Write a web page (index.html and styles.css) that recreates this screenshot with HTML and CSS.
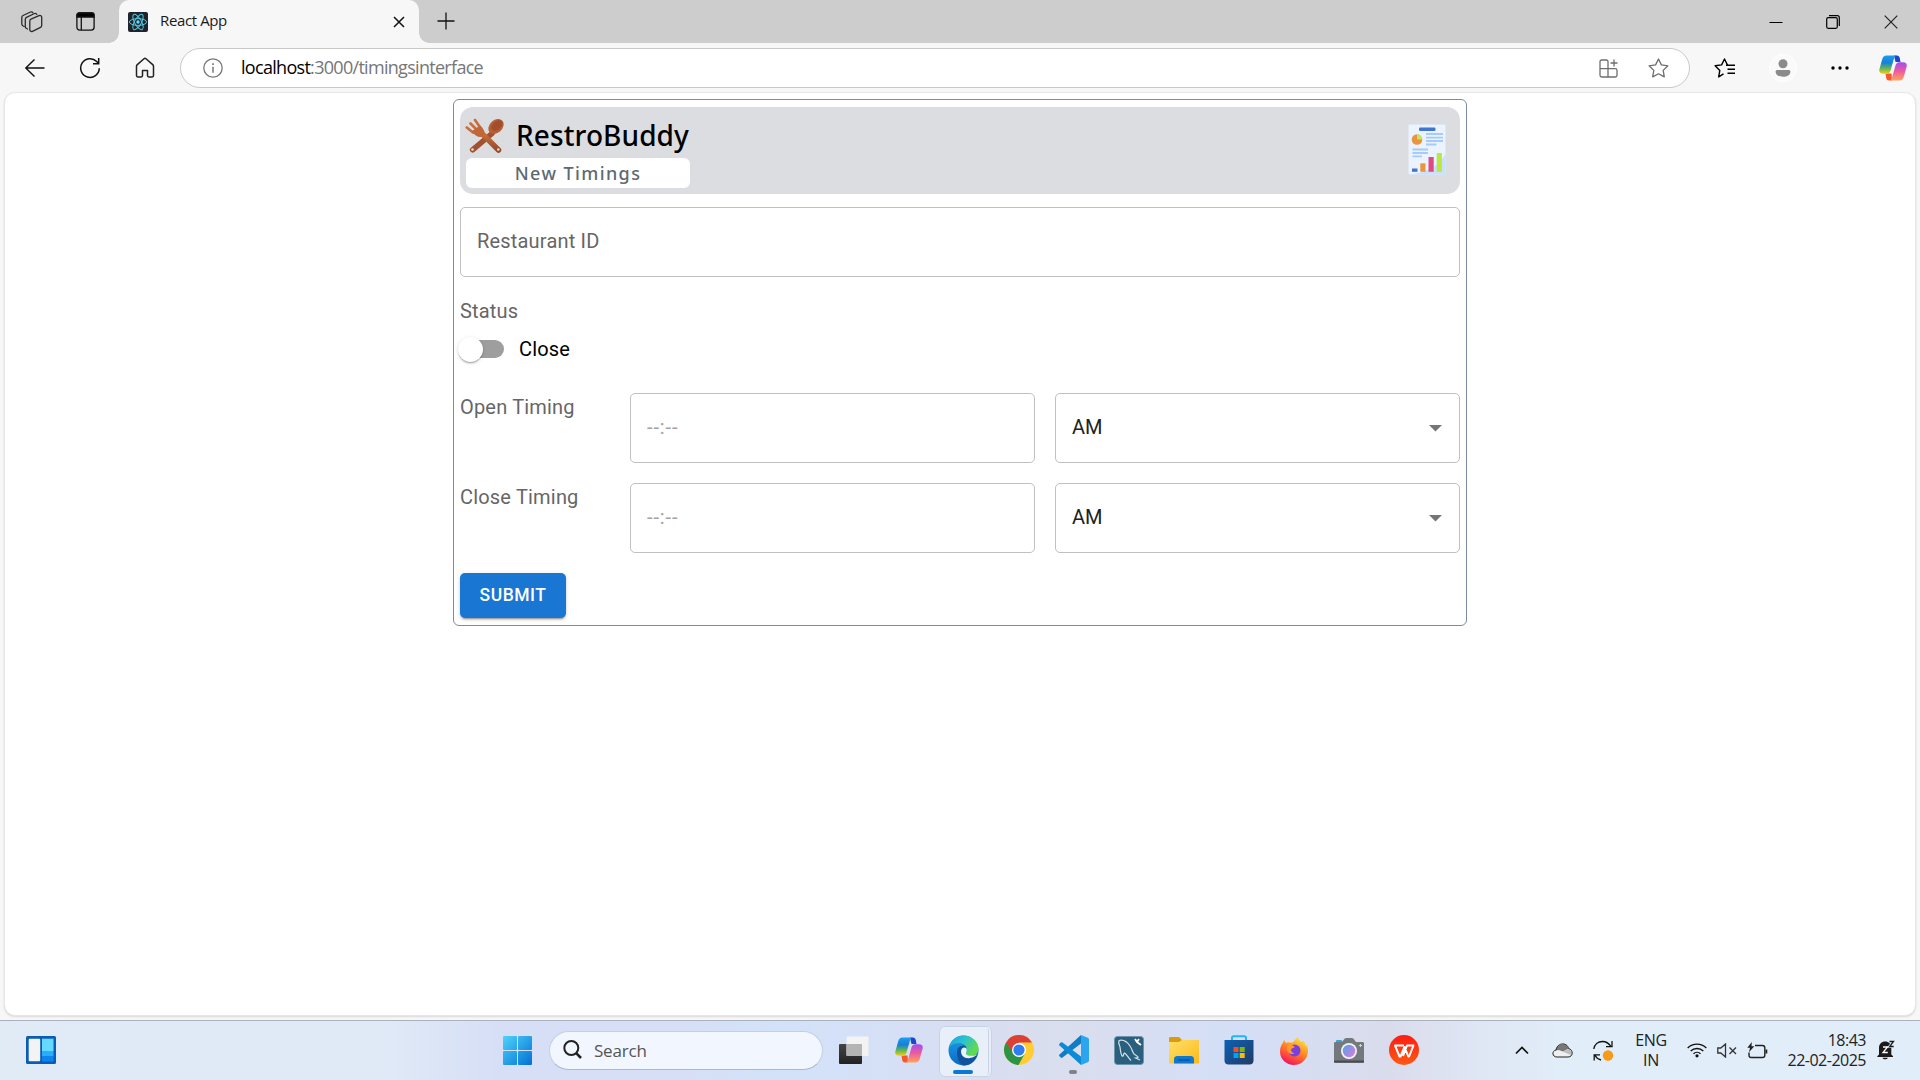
FILE: index.html
```html
<!DOCTYPE html>
<html lang="en">
<head>
<meta charset="utf-8">
<title>React App</title>
<link rel="stylesheet" href="styles.css">
</head>
<body>
<svg class="defs" width="0" height="0" aria-hidden="true">
  <defs>
    <linearGradient id="cpA" x1="0" y1="0" x2="0" y2="1"><stop offset="0" stop-color="#1b9df0"/><stop offset=".4" stop-color="#1580d6"/><stop offset=".7" stop-color="#5fb55a"/><stop offset="1" stop-color="#f0cf12"/></linearGradient>
    <linearGradient id="cpB" x1="0" y1="0" x2="0" y2="1"><stop offset="0" stop-color="#a24df0"/><stop offset=".5" stop-color="#ee5c9c"/><stop offset="1" stop-color="#ffa45e"/></linearGradient>
    <symbol id="copilot" viewBox="0 0 28 26">
      <path d="M15 .5h3c1.500 0 2.300 1 2.700 2.300L21.500 7h-5z" fill="#1b47cf"/>
      <path d="M13 25.500h-3c-1.500 0-2.300-1-2.700-2.300L6.500 18.500h6z" fill="#f2592c"/>
      <path d="M7.600.5H18c-1.800.2-2.600 1.600-3.100 3.300l-3.300 11.400c-.6 2.200-1.700 3.500-4 3.500H4c-2.800 0-4.300-1.600-3.600-4.500L3.300 4C3.900 1.800 5.200.5 7.600.5z" fill="url(#cpA)"/>
      <path d="M20.400 25.500H10c1.800-.2 2.600-1.600 3.100-3.300l3.300-11.400c.6-2.200 1.700-3.500 4-3.500H24c2.800 0 4.300 1.600 3.600 4.500L24.700 22c-.6 2.200-1.900 3.500-4.300 3.500z" fill="url(#cpB)"/>
    </symbol>
  </defs>
</svg>

<div class="tabstrip">
  <div class="strip-icon first">
    <svg width="22" height="22" viewBox="0 0 22 22" fill="none" stroke="#2b2b2b" stroke-width="1.300" stroke-linejoin="round" stroke-linecap="round"><path d="M3.200 15.500 1.800 14.700C1 14.200.8 13.700.8 12.800V6.500c0-1 .4-1.600 1.200-2L9.500 1c1-.4 1.800-.1 2.300.7"/><path d="M6.500 18 5.300 17.300c-.8-.5-1-1-1-1.900V8.300c0-1 .4-1.600 1.200-2L13.500 2.500c1-.4 1.900-.1 2.300.9"/><path d="M8.800 10.200c0-1 .4-1.600 1.200-2L18 4.700c1.400-.6 2.700.1 2.700 1.500v8.200c0 1-.4 1.600-1.200 2l-8 3.900c-1.400.6-2.700-.1-2.700-1.500z"/></svg>
  </div>
  <div class="strip-icon">
    <svg width="19" height="19" viewBox="0 0 19 19" fill="none" stroke="#111" stroke-width="1.300"><rect x=".9" y=".9" width="17.200" height="17.200" rx="2.800"/><path d="M1 2.800C1 1.500 1.800 1 3 1h13c1.200 0 2 .6 2 1.800V5H1z" fill="#000"/><path d="M5.300 5v13"/></svg>
  </div>
  <div class="tab">
    <svg width="20" height="20" viewBox="0 0 20 20"><rect width="20" height="20" rx="2" fill="#20232a"/><g fill="none" stroke="#53c5e0" stroke-width="1"><ellipse cx="10" cy="10" rx="8.600" ry="3.400"/><ellipse cx="10" cy="10" rx="8.600" ry="3.400" transform="rotate(60 10 10)"/><ellipse cx="10" cy="10" rx="8.600" ry="3.400" transform="rotate(120 10 10)"/></g><circle cx="10" cy="10" r="1.700" fill="#61dafb"/></svg>
    <span class="tab-title">React App</span>
    <svg class="tab-close" width="12" height="12" viewBox="0 0 12 12" stroke="#111" stroke-width="1.500"><path d="M1 1l10 10M11 1 1 11"/></svg>
  </div>
  <svg class="new-tab" width="18" height="18" viewBox="0 0 18 18" stroke="#111" stroke-width="1.300"><path d="M9 .5v17M.5 9h17"/></svg>
  <div class="window-controls">
    <svg width="14" height="14" viewBox="0 0 14 14" stroke="#000"><path d="M.5 7.500h13"/></svg>
    <svg width="14" height="14" viewBox="0 0 14 14" fill="none" stroke="#000" stroke-width="1.200"><rect x=".7" y="2.700" width="10.600" height="10.600" rx="1.500"/><path d="M3 .7h8.300c1.200 0 2 .8 2 2V11"/></svg>
    <svg width="14" height="14" viewBox="0 0 14 14" stroke="#222" stroke-width="1.200"><path d="M.7.7l12.600 12.600M13.300.7.7 13.300"/></svg>
  </div>
</div>

<div class="toolbar">
  <div class="nav">
    <svg width="22" height="20" viewBox="0 0 22 20" fill="none" stroke="#111" stroke-width="1.400"><path d="M20.500 10H2M10.500 1.500 1.800 10l8.700 8.500"/></svg>
    <svg width="22" height="22" viewBox="0 0 22 22" fill="none" stroke="#111" stroke-width="1.500"><path d="M20.300 11.300A9.300 9.300 0 1 1 17.700 4.600L19.500 6.500"/><path d="M19.700 1v5.700H14"/></svg>
    <svg width="20" height="22" viewBox="0 0 20 22" fill="none" stroke="#222" stroke-width="1.500" stroke-linejoin="round"><path d="M1.500 9.300c0-.7.300-1.200.8-1.700L9 1.800c.7-.6 1.300-.6 2 0l6.700 5.800c.5.500.8 1 .8 1.700V18.500c0 .9-.5 1.400-1.300 1.400h-3.400c-.8 0-1.300-.5-1.300-1.300v-5H7.500v5c0 .8-.5 1.300-1.300 1.300H2.800c-.8 0-1.300-.5-1.300-1.400z"/></svg>
  </div>
  <div class="urlbar">
    <svg width="20" height="20" viewBox="0 0 20 20" fill="none" stroke="#777" stroke-width="1.300"><circle cx="10" cy="10" r="9.200"/><path d="M10 8.700v6" stroke-width="1.500"/><path d="M10 5.200v1.700" stroke-width="1.700"/></svg>
    <div class="url"><span class="host">localhost</span>:3000/timingsinterface</div>
    <svg class="url-apps" width="19" height="19" viewBox="0 0 19 19" fill="none" stroke="#6e6e6e" stroke-width="1.300"><path d="M9 9.700V2.800C9 1.600 8.400 1 7.200 1H2.800C1.600 1 1 1.600 1 2.800v13.400C1 17.400 1.600 18 2.800 18h13.400c1.200 0 1.800-.6 1.800-1.800v-4.700c0-1.200-.6-1.800-1.800-1.800H1M9 9.700V18M15 .5v7M11.500 4h7"/></svg>
    <svg class="url-star" width="21" height="20" viewBox="0 0 21 20" fill="none" stroke="#6e6e6e" stroke-width="1.300" stroke-linejoin="round"><path d="M10.500 1l2.900 5.900 6.500.9-4.700 4.600 1.100 6.500-5.800-3.100L4.700 18.900l1.100-6.500L1.100 7.800l6.500-.9z"/></svg>
  </div>
  <div class="tools">
    <svg width="22" height="20" viewBox="0 0 22 20" fill="none" stroke="#000" stroke-width="1.400" stroke-linejoin="round"><path d="M9.500 15.800 4.700 18.900l1.100-6.500L1.100 7.800l6.500-.9L10.500 1l2.900 5.900M12 7.200h9M13.500 11.200H21M13.500 15.200H21"/></svg>
    <svg width="28" height="28" viewBox="0 0 28 28"><circle cx="14" cy="14" r="13.500" fill="#fafafa" stroke="#fff"/><circle cx="14" cy="9.800" r="4.500" fill="#8b8b8b"/><path d="M8.600 16h10.800c1.300 0 2 .6 2 1.800 0 3-3.200 5-7.400 5s-7.400-2-7.400-5c0-1.200.7-1.800 2-1.800z" fill="#8b8b8b"/></svg>
    <svg width="18" height="4" viewBox="0 0 18 4"><circle cx="2" cy="2" r="1.700"/><circle cx="9" cy="2" r="1.700"/><circle cx="16" cy="2" r="1.700"/></svg>
    <svg width="28" height="26"><use href="#copilot"/></svg>
  </div>
</div>

<main class="viewport">
  <section class="card">
    <header class="banner">
      <div class="brand">
        <div class="brand-row">
          <svg width="39" height="36" viewBox="0 0 39 36">
            <defs><linearGradient id="wood" x1="0" y1="0" x2="0" y2="1"><stop offset="0" stop-color="#c8713c"/><stop offset="1" stop-color="#97492a"/></linearGradient></defs>
            <path d="M4.600 32.300 24 16" stroke="#a2502e" stroke-width="5.500" stroke-linecap="round" transform="translate(3 -.5)"/>
            <ellipse cx="31" cy="8.500" rx="8.600" ry="6.300" transform="rotate(-42 31 8.500)" fill="#b45f35"/>
            <ellipse cx="31.800" cy="7.500" rx="6.400" ry="4.200" transform="rotate(-42 31.800 7.500)" fill="#a34e2a"/>
            <path d="M33.500 32 17 15.500" stroke="url(#wood)" stroke-width="5.500" stroke-linecap="round"/>
            <path d="M1.800 9.500 8 14.500M5.500 5.500l6 6M10 2l5.500 8" stroke="#c96f3c" stroke-width="2.700" stroke-linecap="round"/>
            <path d="M6.500 13.500 15 7.500c3 2.500 5.500 6 4 9.500-3 4-8 2-12.500-3.500z" fill="#bf6738"/>
            <circle cx="7.500" cy="31.500" r="1.300" fill="#e9dcd7"/><circle cx="33.300" cy="31.500" r="1.300" fill="#e9dcd7"/>
          </svg>
          <div class="brand-name">RestroBuddy</div>
        </div>
        <div class="page-name">New Timings</div>
      </div>
      <svg width="38" height="51" viewBox="0 0 38 51">
        <rect x=".5" y=".5" width="37" height="50" rx="1" fill="#eaf3ff"/>
        <path d="M37.500 30v20.500H2C20 48.500 31 41 37.500 30z" fill="#cbe0fb"/>
        <rect x="11" y="3.500" width="16.500" height="3.500" rx="1.200" fill="#4275cc"/>
        <circle cx="9" cy="15.500" r="5.300" fill="#e8953c"/><path d="M9 15.500v-5.300a5.300 5.300 0 0 1 5.300 5.300z" fill="#c4e860"/>
        <path d="M18 10h17M18 13.700h17M18 17h17M18 20.500h10.500M4.500 25.500h15.500M4.500 29h15.500M4.500 32.300h9.500" stroke="#a6cafa" stroke-width="1.800"/>
        <path d="M4 44.500h5.500v3.300H4z" fill="#4275cc"/><path d="M12.300 39.300h5.200v8.500h-5.200z" fill="#e8953c"/><path d="M20.500 33h5.200v14.800h-5.200z" fill="#de4a85"/><path d="M28.700 29h5.200v18.800h-5.200z" fill="#bce641"/>
      </svg>
    </header>

    <div class="field id-field">Restaurant ID</div>

    <div class="status-label">Status</div>
    <div class="switch-row">
      <div class="switch"><div class="thumb"></div></div>
      <span>Close</span>
    </div>

    <div class="timing-row">
      <div class="label">Open Timing</div>
      <div class="field time">--:--</div>
      <div class="field select">AM<svg width="13" height="7" viewBox="0 0 13 7"><path d="M0 0h13L6.500 6.500z" fill="#757575"/></svg></div>
    </div>
    <div class="timing-row">
      <div class="label">Close Timing</div>
      <div class="field time">--:--</div>
      <div class="field select">AM<svg width="13" height="7" viewBox="0 0 13 7"><path d="M0 0h13L6.500 6.500z" fill="#757575"/></svg></div>
    </div>
    <button class="submit">SUBMIT</button>
  </section>
</main>

<footer class="taskbar">
  <svg class="widgets" width="30" height="28" viewBox="0 0 30 28"><rect width="30" height="28" rx="1.500" fill="#0b5cb5"/><rect x="2.700" y="2.700" width="11.500" height="22.600" rx="1" fill="#f3f3f3"/><rect x="16" y="2.700" width="11.500" height="12.300" fill="#66d9ff"/><rect x="16" y="15" width="11.500" height="5.500" fill="#28aefc"/><rect x="16" y="20.500" width="11.500" height="5" fill="#0b85f2"/></svg>

  <div class="apps">
    <svg class="start" width="29" height="29" viewBox="0 0 29 29"><defs><linearGradient id="win" gradientUnits="userSpaceOnUse" x1="0" y1="0" x2="29" y2="29"><stop offset="0" stop-color="#4fd3fc"/><stop offset="1" stop-color="#0270d2"/></linearGradient></defs><g fill="url(#win)"><rect width="14" height="14" rx="1"/><rect x="15" width="14" height="14" rx="1"/><rect y="15" width="14" height="14" rx="1"/><rect x="15" y="15" width="14" height="14" rx="1"/></g></svg>
    <div class="search">
      <svg width="20" height="20" viewBox="0 0 20 20" fill="none" stroke="#222" stroke-width="2"><circle cx="8.300" cy="8" r="7"/><path d="M13.200 13.200 18 18" stroke-width="2.600"/></svg>
      <span>Search</span>
    </div>
    <div class="app">
      <svg width="30" height="28" viewBox="0 0 30 28"><defs><linearGradient id="tv" x1="0" y1="0" x2="0" y2="1"><stop offset="0" stop-color="#444"/><stop offset="1" stop-color="#222"/></linearGradient></defs><rect y="8" width="23" height="20" rx="1" fill="url(#tv)"/><rect x="7.500" y=".5" width="22" height="19.500" rx="1" fill="#f3f3f3"/><path d="M7.500 8H22c.6 0 1 .4 1 1v11H8.500a1 1 0 0 1-1-1z" fill="#b4b4b4"/></svg>
    </div>
    <div class="app"><svg width="28" height="26"><use href="#copilot"/></svg></div>
    <div class="app active">
      <svg width="31" height="31" viewBox="0 0 31 31"><defs><linearGradient id="edT" x1="0" y1="0" x2="1" y2=".5"><stop offset="0" stop-color="#1d9fe0"/><stop offset=".5" stop-color="#2bc1cf"/><stop offset="1" stop-color="#62db4b"/></linearGradient><linearGradient id="edB" x1="0" y1="0" x2="0" y2="1"><stop offset="0" stop-color="#1ba0e8"/><stop offset="1" stop-color="#0b6ac4"/></linearGradient></defs>
        <circle cx="15.500" cy="15.500" r="15" fill="url(#edB)"/>
        <path d="M9 17c0-4 3-7 7.500-6.500 3 .5 3 4 1.500 5.500-1 1.300-.5 4.500 4.500 5 3 .3 5.500-.8 6.800-1.500C27 26.500 22 31 15.500 30.500 11 29 9 23 9 17z" fill="#11529f"/>
        <path d="M.8 13C2 5.500 8.500.5 15.500.5c8.500 0 15 6.500 15 13 0 5-3.500 7.500-7.500 7.500-3 0-5.500-1-5.500-2.700 0-1 1.300-1.500 1.300-3.800C18.800 11 15.500 8 11 8 6 8 2.500 10.300.8 13z" fill="url(#edT)"/>
        <path d="M18.500 13.500c-2-2-5.500-.5-5.500 3 0 4 3.500 7.500 9 6.500 3.500-.6 6-2 7.300-3.500-3 1.500-7 1.700-9.500.8-3-1.200-1.500-3-1.100-4.200.2-1 .2-1.800-.2-2.600z" fill="#e8f3fb"/>
      </svg>
    </div>
    <div class="app">
      <svg width="30" height="30" viewBox="0 0 30 30"><circle cx="15" cy="15" r="15" fill="#ffcc33"/><path d="M15 15 2 7.500A15 15 0 0 0 14.500 30L21 18.500z" fill="#2c9447"/><path d="M2 7.500A15 15 0 0 1 28 7.500H15L9 18z" fill="#dc4034"/><circle cx="15" cy="15" r="7" fill="#fff"/><circle cx="15" cy="15" r="5.600" fill="#2f7df0"/></svg>
    </div>
    <div class="app running">
      <svg width="30" height="30" viewBox="0 0 30 30"><path d="M22 0v8.500L3.500 22.500a1.500 1.500 0 0 1-1.800 0L.5 21.200c-.6-.5-.6-1.200 0-1.700z" fill="#0f7cc4"/><path d="M22 30v-8.500L3.500 7.500a1.500 1.500 0 0 0-1.800 0L.5 8.800c-.6.5-.6 1.200 0 1.700z" fill="#0b8ad6"/><path d="M22 0l6.800 2.700c.8.400 1.200 1 1.200 1.800v21c0 .8-.4 1.400-1.200 1.800L22 30z" fill="#2ba6ee"/></svg>
    </div>
    <div class="app">
      <svg width="30" height="29" viewBox="0 0 30 29"><rect x=".5" y=".5" width="29" height="28" rx="3" fill="#2b5f7e" stroke="#6f93aa"/><path d="M5 4.500c4-1 8 1 11 5.500 2 3 2.500 6 4 8 1.500 1 3 1.500 4.500 3.500M5 4.500c-1 3 .5 4 1 6.500s0 5 2 9c2 1 1-2 2.500-3 2 1 4 5 6.500 7.500M24.500 21.500l-3 .5 4.500 2" fill="none" stroke="#d3e2ea" stroke-width="1.200"/><path d="M21 3l2 3 4 3M25 3l-2 3" stroke="#fff" stroke-width="1.800"/></svg>
    </div>
    <div class="app">
      <svg width="30" height="27" viewBox="0 0 30 27"><defs><linearGradient id="fld" x1="0" y1="0" x2="1" y2="1"><stop offset="0" stop-color="#ffe06a"/><stop offset="1" stop-color="#fcb918"/></linearGradient></defs><path d="M0 1.500C0 .6.600 0 1.500 0H10l3 3h15.500c.9 0 1.500.6 1.500 1.500V10H0z" fill="#dc9b0b"/><path d="M0 5h10l3-2h15.500c.9 0 1.500.6 1.500 1.500V26.500H0z" fill="url(#fld)"/><path d="M5 26.500v-4c0-2.200 1-3.500 3.500-3.500h13c2.500 0 3.500 1.300 3.500 3.500v4z" fill="#1177cd"/><path d="M9 23h12" stroke="#07529c" stroke-width="1.300"/></svg>
    </div>
    <div class="app">
      <svg width="30" height="30" viewBox="0 0 30 30"><defs><linearGradient id="sto" x1="0" y1="0" x2="1" y2="1"><stop offset="0" stop-color="#0c62b5"/><stop offset="1" stop-color="#233a66"/></linearGradient></defs><path d="M8 6V3c0-1 .5-1.700 1.700-1.700h10.600C21.500 1.300 22 2 22 3v3" fill="none" stroke="#28b4f0" stroke-width="2"/><path d="M.5 5h29v20.500c0 2.500-1.500 4-4 4h-21c-2.500 0-4-1.500-4-4z" fill="url(#sto)"/><path d="M9.500 12h5v5h-5z" fill="#f25022"/><path d="M15.700 12h5v5h-5z" fill="#7fba00"/><path d="M9.500 18h5v5h-5z" fill="#00a4ef"/><path d="M15.700 18h5v5h-5z" fill="#ffb900"/></svg>
    </div>
    <div class="app">
      <svg width="28" height="29" viewBox="0 0 28 29"><defs><linearGradient id="ffx" x1=".8" y1="0" x2=".3" y2="1"><stop offset="0" stop-color="#fff04a"/><stop offset=".4" stop-color="#ff9a22"/><stop offset=".75" stop-color="#ff4a3b"/><stop offset="1" stop-color="#e8106f"/></linearGradient></defs><path d="M3 6.500C3.500 5 4 4.500 4.500 4c.2 1.300.7 2 1.500 2.700C8 6 10 6 11.500 6.700 14 6 15.500 3 18 .5c.5 2.500 1.500 4 3.500 5.500L23 4.500c2 2 2.500 3.500 2.800 6 1.200-.5 1-1.500.8-2.500 2 4 1.800 9.500-.2 13.500C24 26 19.500 29 14 29 6.500 29 0 23.500 0 15.500 0 12 1 9 3 6.500z" fill="url(#ffx)"/><circle cx="14.500" cy="14.500" r="6" fill="#7a3fe0"/><path d="M7 10c2.500-2 5-1.500 7 .3 1.500 1.200-1 2-2.500 2.500-1 2 .5 4 3 4.700-3.500 1.500-7-.5-7.500-3.500z" fill="#ff9a2a"/></svg>
    </div>
    <div class="app">
      <svg class="camera" width="30" height="25" viewBox="0 0 30 25"><defs><linearGradient id="lens" x1="0" y1="0" x2="1" y2="1"><stop offset="0" stop-color="#4aa8ec"/><stop offset=".5" stop-color="#9a8ce0"/><stop offset="1" stop-color="#e07be8"/></linearGradient></defs><rect x="2" y="2" width="6" height="4" rx="1" fill="#2aa8e0"/><path d="M1.500 4H8l2.500-3.200c.5-.6 1-.8 1.700-.8h5.600c.7 0 1.200.2 1.700.8L22 4h6.500c1 0 1.500.5 1.500 1.500v18c0 .7-.3 1-1 1H1c-.7 0-1-.3-1-1v-18C0 4.500.5 4 1.500 4z" fill="#74797d"/><path d="M0 22.500h30V24c0 .5-.3.700-1 .7H1c-.7 0-1-.2-1-.7z" fill="#484c50"/><circle cx="15" cy="13" r="8" fill="#f1f1f1"/><circle cx="15" cy="13" r="6.200" fill="url(#lens)"/><path d="M26.500 6v3M25 7.500h3" stroke="#d5d5d5"/></svg>
    </div>
    <div class="app">
      <svg width="30" height="30" viewBox="0 0 30 30"><defs><linearGradient id="wps" x1="0" y1="0" x2="0" y2="1"><stop offset="0" stop-color="#fb1c14"/><stop offset="1" stop-color="#ff5a12"/></linearGradient></defs><circle cx="15" cy="15" r="15" fill="url(#wps)"/><path d="M15 10.500H6L10.500 21.500h1L15.500 12l3.800 9.500h.8L24.500 10.500H18L14 21" fill="none" stroke="#fff" stroke-width="2" stroke-linejoin="round"/></svg>
    </div>
  </div>

  <div class="tray">
    <svg class="t-chevron" width="14" height="9" viewBox="0 0 14 9" fill="none" stroke="#111" stroke-width="1.700"><path d="M1 7.500l6-6 6 6"/></svg>
    <svg class="t-cloud" width="21" height="15" viewBox="0 0 21 15"><path d="M5 14c-5 0-5.500-6-1-7C5 2 9 .5 12 1c2.500.5 4 2 4.500 4.500 5 1 5 8.500-.5 8.500z" fill="#efefef"/><path d="M3.500 7.500C5 2.500 9 1 12 1.500c2.300.5 3.700 2 4.200 4.300L11 8.500 7 7z" fill="#777"/><path d="M11 8.700l5.300-2.600c3 .6 4.300 4 2.700 6z" fill="#bdbdbd"/><path d="M5 14c-5 0-5.500-6-1-7C5 2 9 .5 12 1c2.500.5 4 2 4.500 4.500 5 1 5 8.500-.5 8.500z" fill="none" stroke="#222"/></svg>
    <svg class="t-sync" width="21" height="21" viewBox="0 0 21 21" fill="none" stroke="#111" stroke-width="1.300"><path d="M.8 9C1.500 4.500 5 1.500 9.500 1.500c4 0 6.500 2 8.500 5M19 1v5.700h-6M8 20c-3-.7-5-2.500-6-4.700M1.200 20.500v-5.700H7"/><circle cx="15" cy="15.500" r="5.200" fill="#f89a16" stroke="none"/></svg>
    <div class="lang"><span>ENG</span><span>IN</span></div>
    <svg class="t-wifi" width="20" height="16" viewBox="0 0 20 16" fill="none" stroke="#111" stroke-width="1.400"><path d="M.7 6a13 13 0 0 1 18.600 0M3.700 9a9 9 0 0 1 12.600 0M6.500 11.800a5 5 0 0 1 7 0"/><circle cx="10" cy="13.800" r="1.600" fill="#111" stroke="none"/></svg>
    <svg class="t-mute" width="20" height="15" viewBox="0 0 20 15" fill="none" stroke="#333" stroke-width="1.300"><path d="M.8 5h3L8.500 1v13L3.800 10h-3zM12.500 4.500l6.500 6.500M19 4.500 12.500 11"/></svg>
    <svg class="t-batt" width="21" height="17" viewBox="0 0 21 17" fill="none" stroke="#222" stroke-width="1.400"><path d="M8 3.500h7.500c1.500 0 2.300.8 2.300 2.300v7.400c0 1.500-.8 2.300-2.300 2.300H4.300C2.800 15.500 2 14.700 2 13.200V10.500"/><path d="M18.500 7.500h1.800v4h-1.800z" fill="#222" stroke="none"/><path d="M4.800 0 .3 5.700H3L2 10.300l5.300-6H4.500z" fill="#222" stroke="none"/></svg>
    <div class="clock"><span>18:43</span><span>22-02-2025</span></div>
    <svg class="t-bell" width="18" height="20" viewBox="0 0 18 20"><path d="M2 14.500V8c0-4 2.500-6.500 6.200-6.500 3.500 0 6.100 2.500 6.100 6v7l1.700 1.700v.8H.3v-.8zM5.500 17.700h5.300c-.5 2-4.800 2-5.300 0z" fill="#1b1b1b"/><path d="M12.500 1.500h4.300L12.500 6.500h4.300" fill="none" stroke="#e4eef8" stroke-width="2.600"/><path d="M6 7h4.500L6 12.500h4.800" fill="none" stroke="#fff" stroke-width="1.300"/><path d="M12.500 1.500h4L12.700 6.500h4" fill="none" stroke="#1b1b1b" stroke-width="1.300"/></svg>
  </div>
</footer>
</body>
</html>
```
FILE: styles.css
```css
* { box-sizing: border-box; }

body {
  margin: 0;
  width: 1920px;
  height: 1080px;
  overflow: hidden;
  display: flex;
  flex-direction: column;
  background: #f7f7f7;
  font-family: Roboto, sans-serif;
}

svg { display: block; flex: none; }
.defs { position: absolute; }

/* Tab strip */
.tabstrip {
  display: flex;
  align-items: center;
  height: 43px;
  background: #cdcdcd;
  font-family: "Open Sans", sans-serif;
}
.strip-icon { width: 42px; display: flex; justify-content: center; }
.strip-icon.first { width: 64px; }
.tab {
  position: relative;
  display: flex;
  align-items: center;
  width: 300px;
  height: 43px;
  margin-left: 13px;
  padding: 0 14px 0 9px;
  background: #f7f7f7;
  border-radius: 10px 10px 0 0;
}
.tab::before, .tab::after {
  content: "";
  position: absolute;
  bottom: 0;
  width: 10px;
  height: 10px;
}
.tab::before { left: -10px; background: radial-gradient(circle at 0 0, #cdcdcd 9.5px, #f7f7f7 10px); }
.tab::after { right: -10px; background: radial-gradient(circle at 100% 0, #cdcdcd 9.5px, #f7f7f7 10px); }
.tab-title { margin: -3px 0 0 12px; font-size: 15px; letter-spacing: -0.38px; color: #1a1a1a; }
.tab-close { margin-left: auto; }
.new-tab { margin-left: 18px; margin-top: -1px; }
.window-controls { display: flex; gap: 44px; margin-left: auto; padding-right: 22px; }
.window-controls svg:first-child { margin-right: -1px; }

/* Address row */
.toolbar { display: flex; align-items: center; height: 49px; padding-top: 1px; }
.nav { display: flex; width: 180px; padding-left: 24px; align-items: center; gap: 33px; }
.nav svg:last-child { margin-left: 1px; }
.urlbar {
  display: flex;
  align-items: center;
  width: 1510px;
  height: 40px;
  padding: 0 20px 0 22px;
  background: #fff;
  border: 1px solid #c9c9c9;
  border-radius: 20px;
}
.url { margin: -2px 0 0 18px; font: 18px "Open Sans", sans-serif; letter-spacing: -0.7px; color: #767676; }
.host { color: #000; }
.url-apps { margin-left: auto; }
.url-star { margin-left: 30px; }
.tools { display: flex; align-items: center; padding-left: 24px; }
.tools svg:nth-child(2) { margin-left: 33px; }
.tools svg:nth-child(3) { margin-left: 34px; }
.tools svg:nth-child(4) { margin-left: 30px; }

/* Page */
.viewport {
  height: 924px;
  margin: 0 4px;
  padding-top: 6px;
  background: #fff;
  border: 1px solid #e6e6e6;
  border-radius: 11px;
  box-shadow: 0 1px 2px rgba(0, 0, 0, .12);
}
.card {
  width: 1014px;
  height: 527px;
  margin: 0 auto;
  padding: 7px 6px;
  border: 1px solid #7b8ba6;
  border-radius: 6px;
}
.banner {
  display: flex;
  justify-content: space-between;
  height: 87px;
  padding: 11px 14px 0 6px;
  background: #dcdde1;
  border-radius: 13px;
}
.banner > svg { margin-top: 6px; }
.brand { width: 224px; }
.brand-row { display: flex; height: 40px; }
.brand-row svg { margin-left: -1px; }
.brand-name {
  margin: -1px 0 0 12px;
  font: 500 28px/36px "Noto Sans", sans-serif;
  letter-spacing: .1px;
  color: #000;
  white-space: nowrap;
}
.page-name {
  height: 30px;
  background: #fff;
  border-radius: 6px;
  text-align: center;
  font: 500 18px/30px "Noto Sans", sans-serif;
  letter-spacing: 1.4px;
  color: #5c6a72;
}
.field {
  display: flex;
  align-items: center;
  height: 70px;
  padding: 0 17px 2px 16px;
  border: 1px solid #c0c0c0;
  border-radius: 5px;
  font-size: 20px;
}
.id-field { margin-top: 13px; letter-spacing: .19px; color: #666; }
.status-label { margin-top: 20px; line-height: 29px; font-size: 20px; letter-spacing: .19px; color: #666; }
.switch-row { display: flex; align-items: center; gap: 15px; height: 47px; padding-bottom: 2px; font-size: 20px; letter-spacing: .19px; color: #000; }
.switch { width: 43px; height: 18px; margin-left: 1px; background: #9e9e9e; border-radius: 9px; }
.thumb {
  width: 25px;
  height: 25px;
  margin: -3px 0 0 -3px;
  background: #fff;
  border-radius: 50%;
  box-shadow: 0 2px 2px -1px rgba(0, 0, 0, .2), 0 1px 1px rgba(0, 0, 0, .14), 0 1px 4px rgba(0, 0, 0, .12);
}
.timing-row { display: grid; grid-template-columns: 150px 405px 405px; gap: 20px; margin-top: 20px; }
.label { font-size: 20px; line-height: 28px; letter-spacing: .19px; color: #666; }
.time { color: #a2a2a2; letter-spacing: .9px; }
.select { justify-content: space-between; padding-right: 17px; color: #212121; }
.select svg { margin-top: 2px; }
.submit {
  display: block;
  width: 106px;
  height: 45px;
  margin-top: 20px;
  padding: 0 0 1px;
  border: 0;
  border-radius: 5px;
  background: #1976d2;
  box-shadow: 0 3px 1px -2px rgba(0, 0, 0, .2), 0 2px 2px rgba(0, 0, 0, .14), 0 1px 5px rgba(0, 0, 0, .12);
  font: 500 17.5px Roboto, sans-serif;
  letter-spacing: .5px;
  color: #fff;
}

/* Taskbar */
.taskbar {
  display: flex;
  align-items: center;
  height: 60px;
  margin-top: 4px;
  padding-bottom: 1px;
  border-top: 1px solid #a9b1be;
  background: linear-gradient(90deg, #e0ebf6 0, #e0eaf7 380px, #d6dff6 500px, #d6dff5 690px, #d3e2f9 780px, #d6dff5 900px, #dadeee 1060px, #d4dff7 1230px, #dadcec 1390px, #dfe6f4 1480px, #e1edf8 1560px, #e1edf8 100%);
}
.widgets { margin-left: 26px; }
.apps { display: flex; align-items: center; margin-left: 447px; height: 58px; }
.start { margin-top: 1px; }
.search {
  display: flex;
  align-items: center;
  width: 274px;
  height: 39px;
  margin: 0 3px 0 17px;
  padding-left: 13px;
  background: #f2f6fe;
  border: 1px solid #c5cfe3;
  border-bottom-color: #adb8cc;
  border-radius: 20px;
  font: 17px "Open Sans", sans-serif;
  color: #555;
}
.search span { margin-left: 11px; letter-spacing: -.2px; }
.app { position: relative; display: flex; align-items: center; justify-content: center; width: 55px; height: 58px; }
.camera { margin-top: 1px; }
.active::before {
  content: "";
  position: absolute;
  left: 3px;
  top: 5px;
  width: 48px;
  height: 49px;
  background: #e9eff9;
  border: 1px solid #c9d3e6;
  border-right: 4px double #c9d3e6;
  border-radius: 6px;
}
.active svg { position: relative; }
.active::after, .running::after {
  content: "";
  position: absolute;
  bottom: 5px;
  left: 17px;
  width: 20px;
  height: 4px;
  border-radius: 2px;
  background: #0a78d4;
}
.running::after { left: 23px; width: 8px; background: #7d828c; }
.tray { display: flex; align-items: center; height: 58px; margin-left: auto; padding-right: 25px; font: 16px "Open Sans", sans-serif; color: #222; }
.t-cloud { margin-left: 23px; }
.t-sync { margin-left: 20px; }
.lang { display: flex; flex-direction: column; align-items: center; width: 30px; margin-left: 22px; line-height: 20px; letter-spacing: -.3px; }
.t-wifi { margin-left: 21px; }
.t-mute { margin-left: 10px; }
.t-batt { margin-left: 10px; }
.clock { display: flex; flex-direction: column; align-items: flex-end; margin-left: 19px; line-height: 20px; width: 79px; white-space: nowrap; letter-spacing: -.5px; }
.t-bell { margin-left: 11px; }
```
